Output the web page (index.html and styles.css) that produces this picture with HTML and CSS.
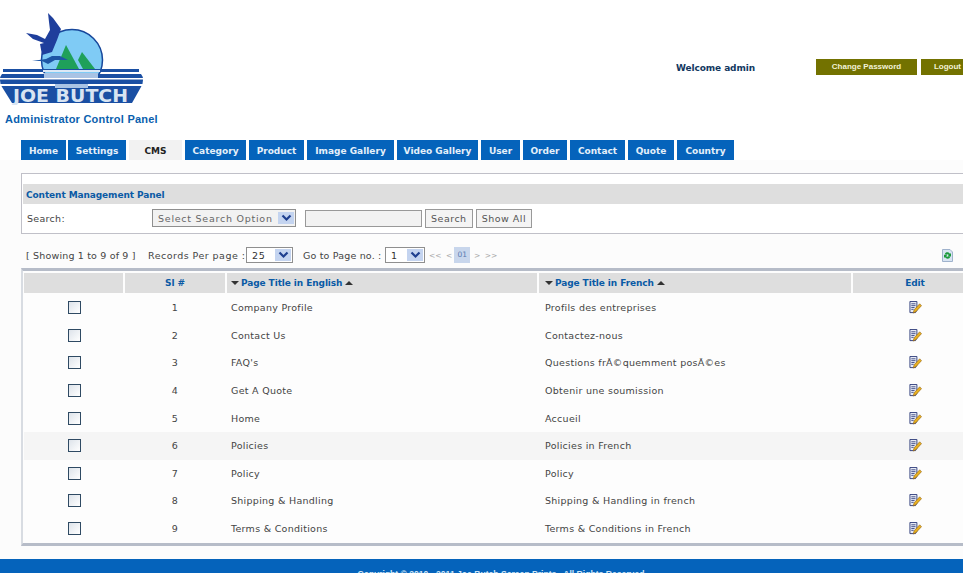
FILE: index.html
```html
<!DOCTYPE html>
<html lang="en">

<head>
    <meta charset="UTF-8">
    <meta name="viewport" content="width=device-width, initial-scale=1.0">
    <title>Administrator Control Panel</title>
    <link rel="stylesheet" href="styles.css">
</head>

<body>
    <div class="wrapper">
        <header class="topArea">
            <div class="logoArea">
                <svg class="logo" width="145" height="105" viewBox="0 0 145 105">
                    <circle cx="72" cy="60" r="30.500" fill="#7fcbf5" stroke="#17479b" stroke-width="1.500" />
                    <path d="M56 69 L66 45 L79 69 Z" fill="#1fa05a" />
                    <path d="M78 60 L82 52 L95 69 H83 Z" fill="#1fa05a" />
                    <path d="M48 13 L53 18 L61 29 L57 40 L52 52 L42 55 L40 44 L44 43 L33 39 L26 33 L37 35 L45 39 L50 30 L49 22 Z" fill="#1f3f9c" />
                    <path d="M32 61 L46 59 L52 56 L60 56 L68 60 L55 60 L48 64 L42 61 Z" fill="#1d56a5" />
                    <path d="M3 69 H139 V72 H3 Z" fill="#1a4fa3" />
                    <path d="M2 74 H141 Q143 76 143 80 Q143 84 141 87 L132 103 H12 L2 87 Q0 84 0 80 Q0 76 2 74 Z" fill="#1a4fa3" />
                    <path d="M0 78 H143 V79.500 H0 Z M0 84 H55 V86 H0 Z M88 84 H143 V86 H88 Z" fill="#fff" />
                    <path d="M43 70 H100 V72 H43 Z" fill="#dce8f5" />
                    <path d="M44 73 H98 V78 H44 Z" fill="#a9c3e4" />
                    <path d="M55 84 H88 V88 H55 Z" fill="#a9c3e4" />
                    <text class="logoText" x="13" y="102" textLength="115" lengthAdjust="spacingAndGlyphs">JOE BUTCH</text>
                </svg>
                <h1 class="panelName">Administrator Control Panel</h1>
            </div>
            <div class="welcome">Welcome admin</div>
            <div class="topBtns">
                <a class="topBtn pwd">Change Password</a>
                <a class="topBtn logout">Logout</a>
            </div>
        </header>

        <nav class="menu">
            <a class="w45 first">Home</a>
            <a class="w58">Settings</a>
            <a class="w53 on">CMS</a>
            <a class="w61">Category</a>
            <a class="w55">Product</a>
            <a class="w87">Image Gallery</a>
            <a class="w81">Video Gallery</a>
            <a class="w39">User</a>
            <a class="w44">Order</a>
            <a class="w55">Contact</a>
            <a class="w46">Quote</a>
            <a class="w57">Country</a>
        </nav>

        <main class="content">
            <section class="searchPanel">
                <h2 class="panelTitle">Content Management Panel</h2>
                <div class="searchRow">
                    <span class="searchLabel">Search:</span>
                    <div class="select selSearch">
                        <span class="selText">Select Search Option</span>
                        <span class="selArrow"><svg width="11" height="8" viewBox="0 0 11 8"><path d="M1.500 1.500 L5.500 5.500 L9.500 1.500" fill="none" stroke="#1f3f8f" stroke-width="2.200" /></svg></span>
                    </div>
                    <input class="searchInput" type="text">
                    <button class="btn">Search</button>
                    <button class="btn">Show All</button>
                </div>
            </section>

            <div class="pager">
                <span class="showing">[ Showing 1 to 9 of 9 ]</span>
                <span class="perPage">Records Per page :</span>
                <div class="select selSmall selRecords">
                    <span class="selText">25</span>
                    <span class="selArrow"><svg width="11" height="8" viewBox="0 0 11 8"><path d="M1.500 1.500 L5.500 5.500 L9.500 1.500" fill="none" stroke="#1f3f8f" stroke-width="2.200" /></svg></span>
                </div>
                <span class="goTo">Go to Page no. :</span>
                <div class="select selSmall selPage">
                    <span class="selText">1</span>
                    <span class="selArrow"><svg width="11" height="8" viewBox="0 0 11 8"><path d="M1.500 1.500 L5.500 5.500 L9.500 1.500" fill="none" stroke="#1f3f8f" stroke-width="2.200" /></svg></span>
                </div>
                <span class="pageLinks">
                    <a>&lt;&lt;</a><a>&lt;</a><a class="curPage">01</a><a>&gt;</a><a>&gt;&gt;</a>
                </span>
                <svg class="refresh" width="11" height="13" viewBox="0 0 11 13">
                    <path d="M0.500 0.500 H8 L10.500 3 V12.500 H0.500 Z" fill="#d8e4f2" stroke="#9fb2cc" />
                    <path d="M3 5 C3 3 7 2.500 8 5 L9 4 V7.500 H5.500 L6.800 6 C6 4.800 4.500 5 4 6 Z" fill="#1c9a3c" />
                    <path d="M8 8 C8 10 4 10.500 3 8 L2 9 V5.800 H5.500 L4.200 7 C5 8.200 6.500 8 7 7 Z" fill="#1c9a3c" />
                </svg>
            </div>

            <section class="listTable">
                <div class="listRow listHead">
                    <div></div>
                    <div class="center">Sl #</div>
                    <div><i class="arrDown"></i>Page Title in English<i class="arrUp"></i></div>
                    <div><i class="arrDown"></i>Page Title in French<i class="arrUp"></i></div>
                    <div class="center">Edit</div>
                </div>
                <div class="listRow"><div class="center"><span class="check"></span></div><div class="center">1</div><div>Company Profile</div><div>Profils des entreprises</div><div class="center"><svg class="editIco" width="13" height="13" viewBox="0 0 14 14"><use href="#editIcon" /></svg></div></div>
                <div class="listRow"><div class="center"><span class="check"></span></div><div class="center">2</div><div>Contact Us</div><div>Contactez-nous</div><div class="center"><svg class="editIco" width="13" height="13" viewBox="0 0 14 14"><use href="#editIcon" /></svg></div></div>
                <div class="listRow"><div class="center"><span class="check"></span></div><div class="center">3</div><div>FAQ's</div><div>Questions frÃ©quemment posÃ©es</div><div class="center"><svg class="editIco" width="13" height="13" viewBox="0 0 14 14"><use href="#editIcon" /></svg></div></div>
                <div class="listRow"><div class="center"><span class="check"></span></div><div class="center">4</div><div>Get A Quote</div><div>Obtenir une soumission</div><div class="center"><svg class="editIco" width="13" height="13" viewBox="0 0 14 14"><use href="#editIcon" /></svg></div></div>
                <div class="listRow"><div class="center"><span class="check"></span></div><div class="center">5</div><div>Home</div><div>Accueil</div><div class="center"><svg class="editIco" width="13" height="13" viewBox="0 0 14 14"><use href="#editIcon" /></svg></div></div>
                <div class="listRow hover"><div class="center"><span class="check"></span></div><div class="center">6</div><div>Policies</div><div>Policies in French</div><div class="center"><svg class="editIco" width="13" height="13" viewBox="0 0 14 14"><use href="#editIcon" /></svg></div></div>
                <div class="listRow"><div class="center"><span class="check"></span></div><div class="center">7</div><div>Policy</div><div>Policy</div><div class="center"><svg class="editIco" width="13" height="13" viewBox="0 0 14 14"><use href="#editIcon" /></svg></div></div>
                <div class="listRow"><div class="center"><span class="check"></span></div><div class="center">8</div><div>Shipping &amp; Handling</div><div>Shipping &amp; Handling in french</div><div class="center"><svg class="editIco" width="13" height="13" viewBox="0 0 14 14"><use href="#editIcon" /></svg></div></div>
                <div class="listRow"><div class="center"><span class="check"></span></div><div class="center">9</div><div>Terms &amp; Conditions</div><div>Terms &amp; Conditions in French</div><div class="center"><svg class="editIco" width="13" height="13" viewBox="0 0 14 14"><use href="#editIcon" /></svg></div></div>
            </section>
        </main>

        <footer class="footer">Copyright &copy; 2010 - 2011 Joe Butch Screen Prints . All Rights Reserved</footer>
    </div>

    <svg class="iconDefs" width="0" height="0">
        <symbol id="editIcon" viewBox="0 0 14 14">
            <path d="M1 0.500 H8.500 V10 L7 12.500 H1 Z" fill="#e8ecf6" stroke="#2c3a78" />
            <path d="M2.500 3 H7 M2.500 5 H7 M2.500 7 H6 M2.500 9 H5" stroke="#2c3a78" stroke-width="0.900" />
            <path d="M11.500 3 L13.500 5 L7.500 11.500 L4.500 13 L5.500 9.500 Z" fill="#e8b020" stroke="#8a5a10" stroke-width="0.600" />
        </symbol>
    </svg>
</body>

</html>
```

FILE: styles.css
```css
* {
    margin: 0;
    padding: 0;
    box-sizing: border-box;
}

html,
body {
    height: 573px;
    overflow: hidden;
}

body {
    background: #fff;
    font-family: "DejaVu Sans", Verdana, sans-serif;
    font-size: 9.5px;
    color: #444;
}

.wrapper {
    width: 963px;
    height: 573px;
    overflow: hidden;
}

/* top */
.topArea {
    height: 140px;
    display: flex;
    align-items: flex-start;
}

.logoArea {
    width: 676px;
    flex-shrink: 0;
}

.logo {
    display: block;
}

.logoText {
    font-family: "DejaVu Sans", sans-serif;
    font-weight: bold;
    font-size: 18px;
    fill: #d8e4f2;
}

.panelName {
    margin: 8px 0 0 5px;
    font-family: "Liberation Sans", Arial, sans-serif;
    font-size: 11px;
    font-weight: bold;
    letter-spacing: .23px;
    color: #0a5fae;
}

.welcome {
    width: 140px;
    flex-shrink: 0;
    margin-top: 62px;
    font-size: 9px;
    font-weight: bold;
    letter-spacing: -.1px;
    color: #12385f;
    line-height: 12px;
}

.topBtns {
    display: flex;
    gap: 4px;
    margin-top: 59px;
}

.topBtn {
    height: 16px;
    line-height: 16px;
    background: #737200;
    color: #f2f2d8;
    font-family: "Liberation Sans", Arial, sans-serif;
    font-size: 8px;
    font-weight: bold;
    text-align: center;
}

.pwd {
    width: 101px;
}

.logout {
    width: 60px;
    flex-shrink: 0;
    padding-right: 7px;
}

/* menu */
.menu {
    height: 20px;
    padding-left: 21px;
    display: flex;
    gap: 3px;
}

.menu a {
    height: 20px;
    line-height: 22px;
    background: #0563bb;
    color: #e4f0fa;
    font-size: 9px;
    font-weight: bold;
    text-align: center;
}

.menu a.first {
    margin-right: -1px;
}

.menu a.on {
    background: #f2f2f2;
    color: #222;
}

.w39 { width: 39px; }
.w44 { width: 44px; }
.w45 { width: 45px; }
.w46 { width: 46px; }
.w53 { width: 53px; }
.w55 { width: 55px; }
.w57 { width: 57px; }
.w58 { width: 58px; }
.w61 { width: 61px; }
.w81 { width: 81px; }
.w87 { width: 87px; }

/* content */
.content {
    height: 399px;
    padding: 13px 0 0 21px;
    background: #fcfcfc;
}

.searchPanel {
    width: 970px;
    height: 61px;
    padding: 10px 1px 0;
    border: 1px solid #c0c0c8;
    background: #fff;
}

.panelTitle {
    height: 20px;
    line-height: 22px;
    padding-left: 3px;
    background: #dedede;
    font-size: 9px;
    letter-spacing: -.1px;
    color: #0a5aa5;
}

.searchRow {
    height: 28px;
    display: flex;
    align-items: center;
    letter-spacing: .3px;
}

.searchLabel {
    width: 129px;
    padding-left: 4px;
    flex-shrink: 0;
}

.select {
    display: flex;
    align-items: center;
    flex-shrink: 0;
    height: 18px;
    padding: 1px;
    border: 1px solid #8f8f8f;
    background: #f2f2f2;
    color: #666;
    letter-spacing: .75px;
}

.selText {
    flex: 1;
    padding-left: 4px;
    white-space: nowrap;
}

.selArrow {
    width: 16px;
    height: 12px;
    flex-shrink: 0;
    display: flex;
    align-items: center;
    justify-content: center;
    background: #c4d4f0;
}

.selSearch {
    width: 144px;
}

.searchInput {
    width: 117px;
    height: 17px;
    margin-left: 9px;
    border: 1px solid #999;
    background: #f2f2f2;
}

.btn {
    height: 19px;
    margin-left: 3px;
    padding: 0 5px;
    border: 1px solid #999;
    background: #f4f4f4;
    color: #555;
    font-family: inherit;
    font-size: 9.5px;
    letter-spacing: .5px;
}

/* pager */
.pager {
    width: 932px;
    height: 34px;
    display: flex;
    align-items: center;
    padding: 8px 0 0 5px;
    letter-spacing: .17px;
    color: #444;
}

.showing {
    width: 122px;
    flex-shrink: 0;
}

.perPage {
    width: 98px;
    flex-shrink: 0;
    letter-spacing: .47px;
}

.selSmall {
    height: 16px;
    background: #fff;
    color: #333;
}

.selRecords {
    width: 47px;
}

.selPage {
    width: 40px;
}

.goTo {
    width: 82px;
    flex-shrink: 0;
    margin-left: 10px;
}

.pageLinks {
    display: flex;
    align-items: center;
    margin-left: 4px;
    font-size: 7.500px;
    letter-spacing: 0;
    color: #aaa;
}

.pageLinks a {
    margin-right: 4.500px;
}

.pageLinks .curPage {
    height: 16px;
    line-height: 16px;
    margin-left: -2.500px;
    margin-right: 4px;
    padding: 0 3px;
    background: #c8d6ec;
    color: #5a7ab0;
}

.refresh {
    margin-left: auto;
}

/* list */
.listTable {
    width: 970px;
    height: 278px;
    border: 1px solid #b6bcc8;
    border-width: 3px 0 3px 2px;
    border-left-color: #d8dce2;
    padding-left: 1px;
    background: #fdfdfd;
}

.listRow {
    height: 27.600px;
    display: grid;
    grid-template-columns: 101px 102px 312px 314px 126px;
    align-items: center;
    letter-spacing: .28px;
    color: #444;
}

.listRow > div {
    padding-left: 4px;
    height: 100%;
    display: flex;
    align-items: center;
}

.listRow > div:nth-child(4) {
    padding-left: 6px;
}

.listRow > .center {
    padding-left: 0;
    justify-content: center;
}

.listRow > .center:nth-child(2),
.listRow > .center:nth-child(5) {
    padding-right: 2px;
}

.listRow.hover {
    background: #f5f5f5;
}

.listHead {
    height: 20px;
    margin: 2px 0 1px;
    font-size: 9px;
    font-weight: bold;
    letter-spacing: -.1px;
    color: #0a5aa5;
}

.listHead > div {
    background: #dedede;
    margin-right: 2px;
}

.listHead > .center:nth-child(2),
.listHead > .center:nth-child(5) {
    padding-right: 0;
}

.arrDown,
.arrUp {
    width: 0;
    height: 0;
    border-left: 4px solid transparent;
    border-right: 4px solid transparent;
}

.arrDown {
    margin-right: 2px;
    border-top: 4px solid #333;
}

.arrUp {
    margin-left: 3px;
    border-bottom: 4px solid #333;
}

.check {
    width: 13px;
    height: 13px;
    border: 1px solid #2f4a63;
    background: linear-gradient(135deg, #dde3ea, #fff);
}

.editIco {
    display: block;
}

.iconDefs {
    position: absolute;
}

/* footer */
.footer {
    height: 14px;
    padding: 10px 0 0 39px;
    background: #0563bb;
    color: #cfe6f8;
    font-family: "Liberation Sans", Arial, sans-serif;
    font-size: 8.600px;
    font-weight: bold;
    text-align: center;
}
```
